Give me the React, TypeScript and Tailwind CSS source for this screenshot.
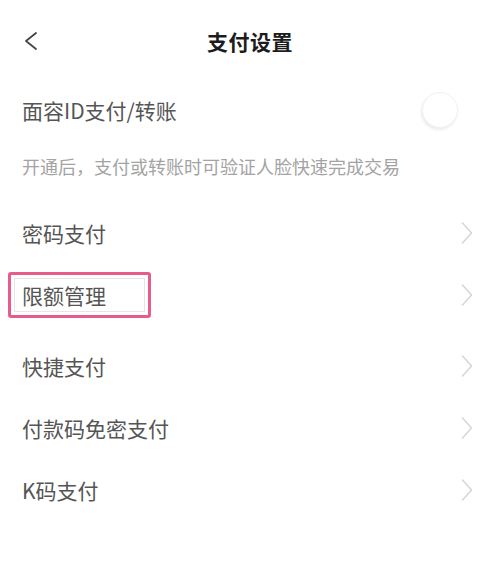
import React from "react";

const font = { fontFamily: '"Noto Sans CJK SC", "Noto Sans", sans-serif' };

function Chevron() {
  return (
    <svg width="12" height="22" viewBox="0 0 12 22" className="shrink-0">
      <polyline points="1.5,1 10.5,11 1.5,21" fill="none" stroke="#d6d6d6" strokeWidth="1.5" strokeLinecap="round" strokeLinejoin="round" />
    </svg>
  );
}

function Row({ label, className = "" }: { label: string; className?: string }) {
  return (
    <div className={`flex h-[62px] items-center justify-between pl-[22px] pr-[27px] ${className}`}>
      <span className="text-[21px] leading-none text-[#555555]">{label}</span>
      <Chevron />
    </div>
  );
}

export default function App() {
  return (
    <div className="w-[500px] h-[563px] bg-white overflow-hidden" style={font}>
      {/* header */}
      <div className="relative flex h-[82px] items-center justify-center">
        <svg width="16" height="20" viewBox="0 0 16 20" className="absolute left-[23px] top-[31px]">
          <polyline points="13,2 3,10 13,18" fill="none" stroke="#444444" strokeWidth="1.8" strokeLinecap="round" strokeLinejoin="round" />
        </svg>
        <span className="text-[21px] font-bold leading-none text-[#1c1c1c] tracking-[0.5px]">支付设置</span>
      </div>

      {/* face id row */}
      <div className="flex h-[56px] items-center justify-between pl-[22px] pr-[42px]">
        <span className="text-[21px] leading-none text-[#555555]">面容ID支付/转账</span>
        <div className="h-[36px] w-[36px] rounded-full bg-white border border-[#f1f1f1] shadow-[-1px_2px_3px_rgba(0,0,0,0.08)]" />
      </div>

      {/* description */}
      <div className="flex h-[56px] items-center pl-[22px]">
        <span className="text-[18px] leading-none text-[#a3a3a3]">开通后，支付或转账时可验证人脸快速完成交易</span>
      </div>

      <div className="h-[8px]" />

      <Row label="密码支付" />

      {/* highlighted row */}
      <div className="relative flex h-[62px] items-center justify-between pl-[22px] pr-[27px]">
        <div className="absolute left-[8px] top-[8px] h-[46px] w-[143px] rounded-[3px] border-[3px] border-[#e95b8c]">
          <div className="absolute left-[3px] top-[3px] right-[3px] bottom-[3px] border border-[#e6e6e6]" />
        </div>
        <span className="relative text-[21px] leading-none text-[#555555]">限额管理</span>
        <Chevron />
      </div>

      <div className="h-[9px]" />

      <Row label="快捷支付" />
      <Row label="付款码免密支付" />
      <Row label="K码支付" />
    </div>
  );
}
